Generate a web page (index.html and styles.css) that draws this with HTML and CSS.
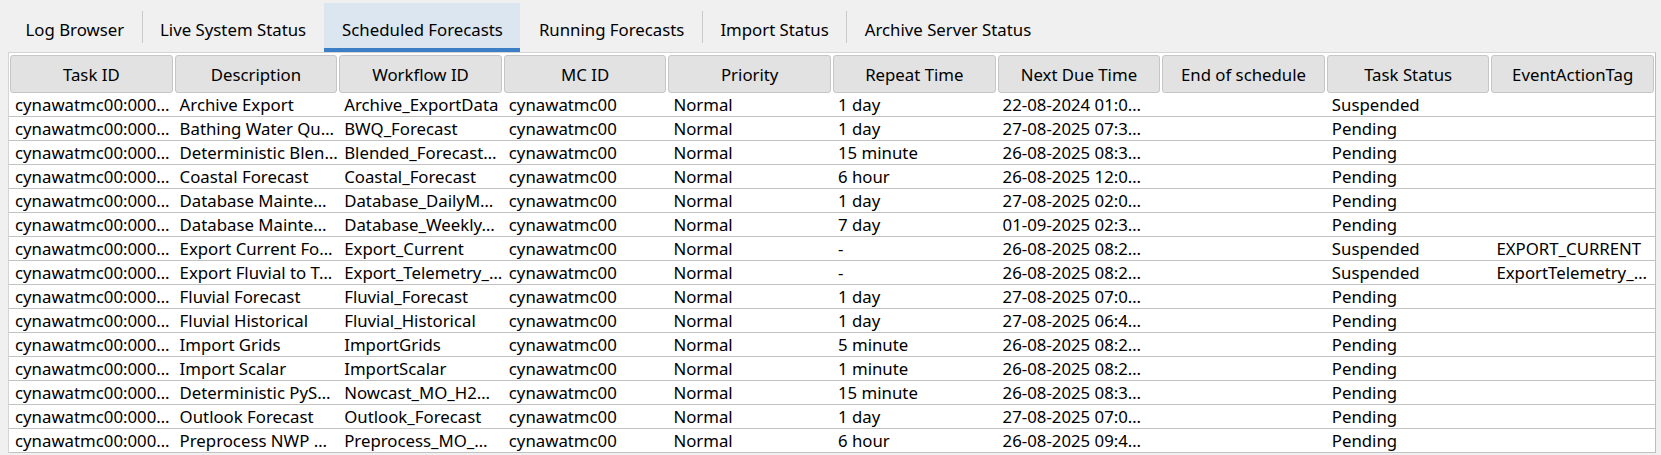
FILE: index.html
```html
<!DOCTYPE html>
<html>
<head>
<meta charset="utf-8">
<link rel="stylesheet" href="styles.css">
</head>
<body>
<div class="tabs">
  <div class="tab">Log Browser</div>
  <div class="tab sep">Live System Status</div>
  <div class="tab sep selected">Scheduled Forecasts</div>
  <div class="tab">Running Forecasts</div>
  <div class="tab sep">Import Status</div>
  <div class="tab sep">Archive Server Status</div>
</div>
<div class="table">
  <div class="hcell">Task ID</div><div class="hcell">Description</div><div class="hcell">Workflow ID</div><div class="hcell">MC ID</div><div class="hcell">Priority</div><div class="hcell">Repeat Time</div><div class="hcell">Next Due Time</div><div class="hcell">End of schedule</div><div class="hcell">Task Status</div><div class="hcell">EventActionTag</div>

  <div class="cell">cynawatmc00:000…</div><div class="cell">Archive Export</div><div class="cell">Archive_ExportData</div><div class="cell">cynawatmc00</div><div class="cell">Normal</div><div class="cell">1 day</div><div class="cell">22-08-2024 01:0…</div><div class="cell"></div><div class="cell">Suspended</div><div class="cell"></div>

  <div class="cell">cynawatmc00:000…</div><div class="cell">Bathing Water Qu…</div><div class="cell">BWQ_Forecast</div><div class="cell">cynawatmc00</div><div class="cell">Normal</div><div class="cell">1 day</div><div class="cell">27-08-2025 07:3…</div><div class="cell"></div><div class="cell">Pending</div><div class="cell"></div>

  <div class="cell">cynawatmc00:000…</div><div class="cell">Deterministic Blen…</div><div class="cell">Blended_Forecast…</div><div class="cell">cynawatmc00</div><div class="cell">Normal</div><div class="cell">15 minute</div><div class="cell">26-08-2025 08:3…</div><div class="cell"></div><div class="cell">Pending</div><div class="cell"></div>

  <div class="cell">cynawatmc00:000…</div><div class="cell">Coastal Forecast</div><div class="cell">Coastal_Forecast</div><div class="cell">cynawatmc00</div><div class="cell">Normal</div><div class="cell">6 hour</div><div class="cell">26-08-2025 12:0…</div><div class="cell"></div><div class="cell">Pending</div><div class="cell"></div>

  <div class="cell">cynawatmc00:000…</div><div class="cell">Database Mainte…</div><div class="cell">Database_DailyM…</div><div class="cell">cynawatmc00</div><div class="cell">Normal</div><div class="cell">1 day</div><div class="cell">27-08-2025 02:0…</div><div class="cell"></div><div class="cell">Pending</div><div class="cell"></div>

  <div class="cell">cynawatmc00:000…</div><div class="cell">Database Mainte…</div><div class="cell">Database_Weekly…</div><div class="cell">cynawatmc00</div><div class="cell">Normal</div><div class="cell">7 day</div><div class="cell">01-09-2025 02:3…</div><div class="cell"></div><div class="cell">Pending</div><div class="cell"></div>

  <div class="cell">cynawatmc00:000…</div><div class="cell">Export Current Fo…</div><div class="cell">Export_Current</div><div class="cell">cynawatmc00</div><div class="cell">Normal</div><div class="cell">-</div><div class="cell">26-08-2025 08:2…</div><div class="cell"></div><div class="cell">Suspended</div><div class="cell">EXPORT_CURRENT</div>

  <div class="cell">cynawatmc00:000…</div><div class="cell">Export Fluvial to T…</div><div class="cell">Export_Telemetry_…</div><div class="cell">cynawatmc00</div><div class="cell">Normal</div><div class="cell">-</div><div class="cell">26-08-2025 08:2…</div><div class="cell"></div><div class="cell">Suspended</div><div class="cell">ExportTelemetry_…</div>

  <div class="cell">cynawatmc00:000…</div><div class="cell">Fluvial Forecast</div><div class="cell">Fluvial_Forecast</div><div class="cell">cynawatmc00</div><div class="cell">Normal</div><div class="cell">1 day</div><div class="cell">27-08-2025 07:0…</div><div class="cell"></div><div class="cell">Pending</div><div class="cell"></div>

  <div class="cell">cynawatmc00:000…</div><div class="cell">Fluvial Historical</div><div class="cell">Fluvial_Historical</div><div class="cell">cynawatmc00</div><div class="cell">Normal</div><div class="cell">1 day</div><div class="cell">27-08-2025 06:4…</div><div class="cell"></div><div class="cell">Pending</div><div class="cell"></div>

  <div class="cell">cynawatmc00:000…</div><div class="cell">Import Grids</div><div class="cell">ImportGrids</div><div class="cell">cynawatmc00</div><div class="cell">Normal</div><div class="cell">5 minute</div><div class="cell">26-08-2025 08:2…</div><div class="cell"></div><div class="cell">Pending</div><div class="cell"></div>

  <div class="cell">cynawatmc00:000…</div><div class="cell">Import Scalar</div><div class="cell">ImportScalar</div><div class="cell">cynawatmc00</div><div class="cell">Normal</div><div class="cell">1 minute</div><div class="cell">26-08-2025 08:2…</div><div class="cell"></div><div class="cell">Pending</div><div class="cell"></div>

  <div class="cell">cynawatmc00:000…</div><div class="cell">Deterministic PyS…</div><div class="cell">Nowcast_MO_H2…</div><div class="cell">cynawatmc00</div><div class="cell">Normal</div><div class="cell">15 minute</div><div class="cell">26-08-2025 08:3…</div><div class="cell"></div><div class="cell">Pending</div><div class="cell"></div>

  <div class="cell">cynawatmc00:000…</div><div class="cell">Outlook Forecast</div><div class="cell">Outlook_Forecast</div><div class="cell">cynawatmc00</div><div class="cell">Normal</div><div class="cell">1 day</div><div class="cell">27-08-2025 07:0…</div><div class="cell"></div><div class="cell">Pending</div><div class="cell"></div>

  <div class="cell">cynawatmc00:000…</div><div class="cell">Preprocess NWP …</div><div class="cell">Preprocess_MO_…</div><div class="cell">cynawatmc00</div><div class="cell">Normal</div><div class="cell">6 hour</div><div class="cell">26-08-2025 09:4…</div><div class="cell"></div><div class="cell">Pending</div><div class="cell"></div>
</div>
</body>
</html>
```
FILE: styles.css
```css
html, body {
  margin: 0;
  padding: 0;
  background: #f0f0f0;
  font-family: "Noto Sans", "Open Sans", sans-serif;
  font-size: 16.8px;
  color: #000;
  overflow: hidden;
}

.tabs {
  display: flex;
  height: 52px;
  padding-left: 7px;
  align-items: stretch;
}

.tab {
  position: relative;
  display: flex;
  align-items: center;
  padding: 8px 17.5px 4px 18.5px;
  margin-top: 3px;
  white-space: nowrap;
}

.tab.sep::before {
  content: "";
  position: absolute;
  left: 0;
  top: 8px;
  bottom: 9px;
  width: 1px;
  background: #c9c9c9;
}

.tab.selected {
  background: #dce6f0;
  border-bottom: 4px solid #3d7fc6;
  padding-bottom: 0;
}

.tab.selected::before {
  display: none;
}

.table {
  margin-left: 8px;
  width: 1648px;
  box-sizing: border-box;
  background: #fff;
  border: 1px solid #d4d4d4;
  border-right-color: #bdbdbd;
  border-bottom: none;
  padding-top: 2px;
  display: grid;
  grid-template-columns: repeat(10, 1fr);
}

.hcell {
  margin: 0 1px;
  height: 38px;
  box-sizing: border-box;
  background: #e2e2e2;
  border: 1px solid #c6c6c6;
  border-radius: 3px;
  display: flex;
  align-items: center;
  justify-content: center;
  white-space: nowrap;
  overflow: hidden;
}

.cell {
  height: 24px;
  box-sizing: border-box;
  padding: 1px 0 0 6px;
  line-height: 22px;
  border-bottom: 1px solid #c2c2c2;
  white-space: nowrap;
  overflow: hidden;
}
```
